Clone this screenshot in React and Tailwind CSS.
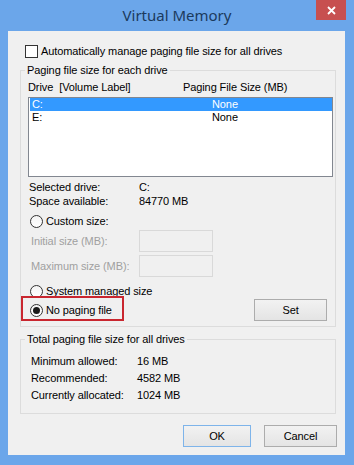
function Radio({ checked }) {
  return (
    <div className="w-[13px] h-[13px] rounded-full border border-[#333] bg-gradient-to-b from-[#f4f4f4] to-[#ffffff] flex items-center justify-center shrink-0">
      {checked && <div className="w-[7px] h-[7px] rounded-full bg-[#1a1a1a]" />}
    </div>
  );
}

function Btn({ children, w, def }) {
  return (
    <div
      className={
        "h-[22px] flex items-center justify-center bg-gradient-to-b from-[#f2f2f2] to-[#e4e4e4] border " +
        (def ? "border-[#7eb4ea]" : "border-[#acacac]")
      }
      style={{ width: w }}
    >
      {children}
    </div>
  );
}

export default function App() {
  return (
    <div className="w-[354px] h-[465px] bg-[#6ba6ea] flex flex-col pb-[10px] font-['Liberation_Sans',Arial,sans-serif] text-[11px] tracking-[-0.1px] text-black leading-none whitespace-nowrap">
      <div className="relative h-[31px] shrink-0 flex items-center justify-center text-[15px] tracking-normal text-[#1b3a5d] pb-[1px] font-['Noto_Sans',sans-serif]">
        Virtual Memory
        <div className="absolute right-[8px] top-0 w-[30px] h-[20px] bg-[#c75050] flex items-center justify-center">
          <svg width="9" height="9" viewBox="0 0 9 9">
            <path d="M1 1L8 8M8 1L1 8" stroke="#fff" strokeWidth="1.8" />
          </svg>
        </div>
      </div>
      <div className="ml-[8px] mr-[9px] flex-1 bg-[#f0f0f0] flex flex-col">
        <div className="mt-[14px] ml-[17px] flex items-center h-[13px]">
          <div className="w-[13px] h-[13px] border border-[#333] bg-white shrink-0" />
          <span className="ml-[3px]">Automatically manage paging file size for all drives</span>
        </div>

        <fieldset className="mt-[4px] ml-[12px] w-[316px] border border-[#dcdcdc] pl-[7px] pr-[2px] pb-[5px]">
          <legend className="ml-[-3px] px-[2px] h-[16px] leading-[16px]">Paging file size for each drive</legend>
          <div className="mt-[2px] h-[14px] flex items-center">
            <div className="w-[155px] flex">
              <span>Drive</span>
              <span className="ml-[6px]">[Volume Label]</span>
            </div>
            <span>Paging File Size (MB)</span>
          </div>
          <div className="mt-[3px] h-[80px] border border-[#828790] bg-white pl-[1px] pr-[0px]">
            <div className="h-[13px] bg-[#3399ff] text-white flex items-center">
              <span className="w-[182px] pl-[2px]">C:</span>
              <span>None</span>
            </div>
            <div className="h-[13px] flex items-center">
              <span className="w-[182px] pl-[2px]">E:</span>
              <span>None</span>
            </div>
          </div>
          <div className="mt-[3px] h-[14px] flex items-center">
            <span className="w-[111px] pl-[1px]">Selected drive:</span>
            <span>C:</span>
          </div>
          <div className="h-[15px] flex items-center">
            <span className="w-[111px] pl-[1px]">Space available:</span>
            <span>84770 MB</span>
          </div>
          <div className="mt-[4px] h-[16px] flex items-center pl-[2px]">
            <Radio />
            <span className="ml-[3px]">Custom size:</span>
          </div>
          <div className="mt-[1px] h-[22px] flex items-center">
            <span className="w-[111px] pl-[3px] text-[#a0a0a0]">Initial size (MB):</span>
            <div className="w-[74px] h-[22px] border border-[#d9d9d9] bg-[#f0f0f0]" />
          </div>
          <div className="mt-[3px] h-[22px] flex items-center">
            <span className="w-[111px] pl-[3px] text-[#a0a0a0]">Maximum size (MB):</span>
            <div className="w-[74px] h-[22px] border border-[#d9d9d9] bg-[#f0f0f0]" />
          </div>
          <div className="mt-[6px] h-[16px] flex items-center pl-[2px]">
            <Radio />
            <span className="ml-[3px]">System managed size</span>
          </div>
          <div className="relative h-[22px] flex items-center justify-between pl-[2px] pr-[6px]">
            <div className="flex items-center">
              <Radio checked />
              <span className="ml-[3px]">No paging file</span>
            </div>
            <Btn w={73}>Set</Btn>
            <div className="absolute left-[-7px] top-[-3px] w-[103px] h-[25px] border-2 border-[#c9262f]" />
          </div>
        </fieldset>

        <fieldset className="mt-[4px] ml-[12px] w-[316px] border border-[#dcdcdc] pl-[10px] pb-[9px]">
          <legend className="ml-[-6px] px-[2px] h-[16px] leading-[16px]">Total paging file size for all drives</legend>
          <div className="mt-[6px] h-[17px] flex items-center">
            <span className="w-[106px]">Minimum allowed:</span>
            <span>16 MB</span>
          </div>
          <div className="h-[17px] flex items-center">
            <span className="w-[106px]">Recommended:</span>
            <span>4582 MB</span>
          </div>
          <div className="h-[17px] flex items-center">
            <span className="w-[106px]">Currently allocated:</span>
            <span>1024 MB</span>
          </div>
        </fieldset>

        <div className="mt-[11px] flex justify-end pr-[8px] gap-[13px]">
          <Btn w={68} def>OK</Btn>
          <Btn w={73}>Cancel</Btn>
        </div>
      </div>
    </div>
  );
}
